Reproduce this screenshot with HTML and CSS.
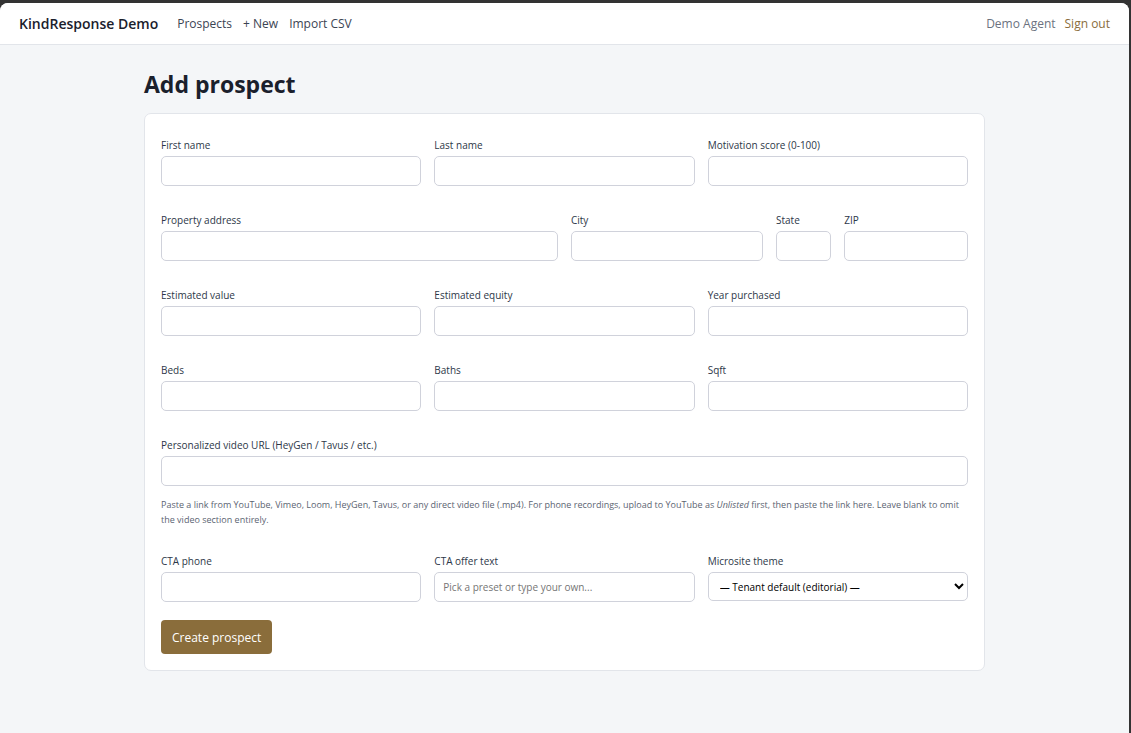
FILE: index.html
```html
<!DOCTYPE html>
<html lang="en">

<head>
	<meta charset="utf-8">
	<title>Add prospect</title>
	<link rel="stylesheet" href="styles.css">
</head>

<body>
	<div class="window">
		<header class="topbar">
			<a class="brand" href="#">KindResponse Demo</a>
			<nav class="nav">
				<a href="#">Prospects</a>
				<a href="#">+ New</a>
				<a href="#">Import CSV</a>
			</nav>
			<div class="account">
				<span>Demo Agent</span>
				<a href="#">Sign out</a>
			</div>
		</header>

		<main class="container">
			<h1>Add prospect</h1>
			<form class="card">
				<div class="grid">
					<div class="field span-4">
						<label for="first-name">First name</label>
						<input type="text" id="first-name">
					</div>
					<div class="field span-4">
						<label for="last-name">Last name</label>
						<input type="text" id="last-name">
					</div>
					<div class="field span-4">
						<label for="score">Motivation score (0-100)</label>
						<input type="number" id="score" min="0" max="100">
					</div>

					<div class="field span-6">
						<label for="address">Property address</label>
						<input type="text" id="address">
					</div>
					<div class="field span-3">
						<label for="city">City</label>
						<input type="text" id="city">
					</div>
					<div class="field span-1">
						<label for="state">State</label>
						<input type="text" id="state" maxlength="2">
					</div>
					<div class="field span-2">
						<label for="zip">ZIP</label>
						<input type="text" id="zip">
					</div>

					<div class="field span-4">
						<label for="value">Estimated value</label>
						<input type="number" id="value">
					</div>
					<div class="field span-4">
						<label for="equity">Estimated equity</label>
						<input type="number" id="equity">
					</div>
					<div class="field span-4">
						<label for="year">Year purchased</label>
						<input type="number" id="year">
					</div>

					<div class="field span-4">
						<label for="beds">Beds</label>
						<input type="number" id="beds">
					</div>
					<div class="field span-4">
						<label for="baths">Baths</label>
						<input type="number" id="baths">
					</div>
					<div class="field span-4">
						<label for="sqft">Sqft</label>
						<input type="number" id="sqft">
					</div>

					<div class="field span-12">
						<label for="video">Personalized video URL (HeyGen / Tavus / etc.)</label>
						<input type="url" id="video">
						<p class="help">Paste a link from YouTube, Vimeo, Loom, HeyGen, Tavus, or any direct video file (.mp4). For phone recordings, upload to YouTube as <em>Unlisted</em> first, then paste the link here. Leave blank to omit the video section entirely.</p>
					</div>

					<div class="field span-4">
						<label for="phone">CTA phone</label>
						<input type="tel" id="phone">
					</div>
					<div class="field span-4">
						<label for="offer">CTA offer text</label>
						<input type="text" id="offer" placeholder="Pick a preset or type your own...">
					</div>
					<div class="field span-4">
						<label for="theme">Microsite theme</label>
						<select id="theme">
							<option>— Tenant default (editorial) —</option>
						</select>
					</div>
				</div>
				<button class="btn" type="submit">Create prospect</button>
			</form>
		</main>
	</div>
</body>

</html>
```

FILE: styles.css
```css
* {
	box-sizing: border-box;
}
body {
	margin: 0;
	padding: 3px 2px 0 0;
	min-height: 100vh;
	display: flex;
	background: #333;
	color: #1a202c;
	font-family: "Segoe UI", "Open Sans", sans-serif;
	font-size: 12px;
	line-height: 18px;
}
a {
	color: inherit;
	text-decoration: none;
}
.window {
	flex: 1;
	background: #f4f6f8;
	border-radius: 8px 8px 0 0;
	overflow: hidden;
}
.topbar {
	display: flex;
	align-items: center;
	padding: 12px 19px 11px;
	background: #fff;
	border-bottom: 1px solid #e2e5ea;
}
.brand {
	margin-right: 19px;
	font-size: 14px;
	font-weight: 600;
}
.nav {
	display: flex;
	gap: 11px;
	color: #3b4453;
}
.account {
	display: flex;
	gap: 9px;
	margin-left: auto;
	color: #6b7280;
}
.account a {
	color: #8a6d3b;
}
.container {
	max-width: 841px;
	margin: 0 auto;
	padding: 23px 0;
}
h1 {
	margin: 0 0 13px;
	font-size: 23px;
	line-height: 32px;
}
.card {
	padding: 23px 16px 16px;
	background: #fff;
	border: 1px solid #e2e5ea;
	border-radius: 7px;
}
.grid {
	display: grid;
	grid-template-columns: repeat(12, minmax(0, 1fr));
	gap: 26px 13px;
	margin-bottom: 18px;
}
.span-1 { grid-column: span 1; }
.span-2 { grid-column: span 2; }
.span-3 { grid-column: span 3; }
.span-4 { grid-column: span 4; }
.span-6 { grid-column: span 6; }
.span-12 { grid-column: span 12; }
label {
	display: block;
	margin-bottom: 3px;
	color: #2d3748;
	font-size: 10px;
	line-height: 16px;
}
input, select {
	display: block;
	width: 100%;
	height: 30px;
	padding: 0 8px;
	background: #fff;
	border: 1px solid #d0d2db;
	border-radius: 5px;
	font-family: inherit;
	font-size: 10px;
}
select {
	height: 29px;
	padding: 0 7px;
	color: #000;
}
input::placeholder {
	color: #757575;
}
.help {
	margin: 11px 0 0;
	color: #5b6472;
	font-size: 9px;
	line-height: 15px;
}
.btn {
	display: block;
	height: 34px;
	padding: 0 11px;
	background: #8a6d3b;
	color: #fff;
	border: 0;
	border-radius: 4px;
	font-family: inherit;
	font-size: 12px;
}
```
